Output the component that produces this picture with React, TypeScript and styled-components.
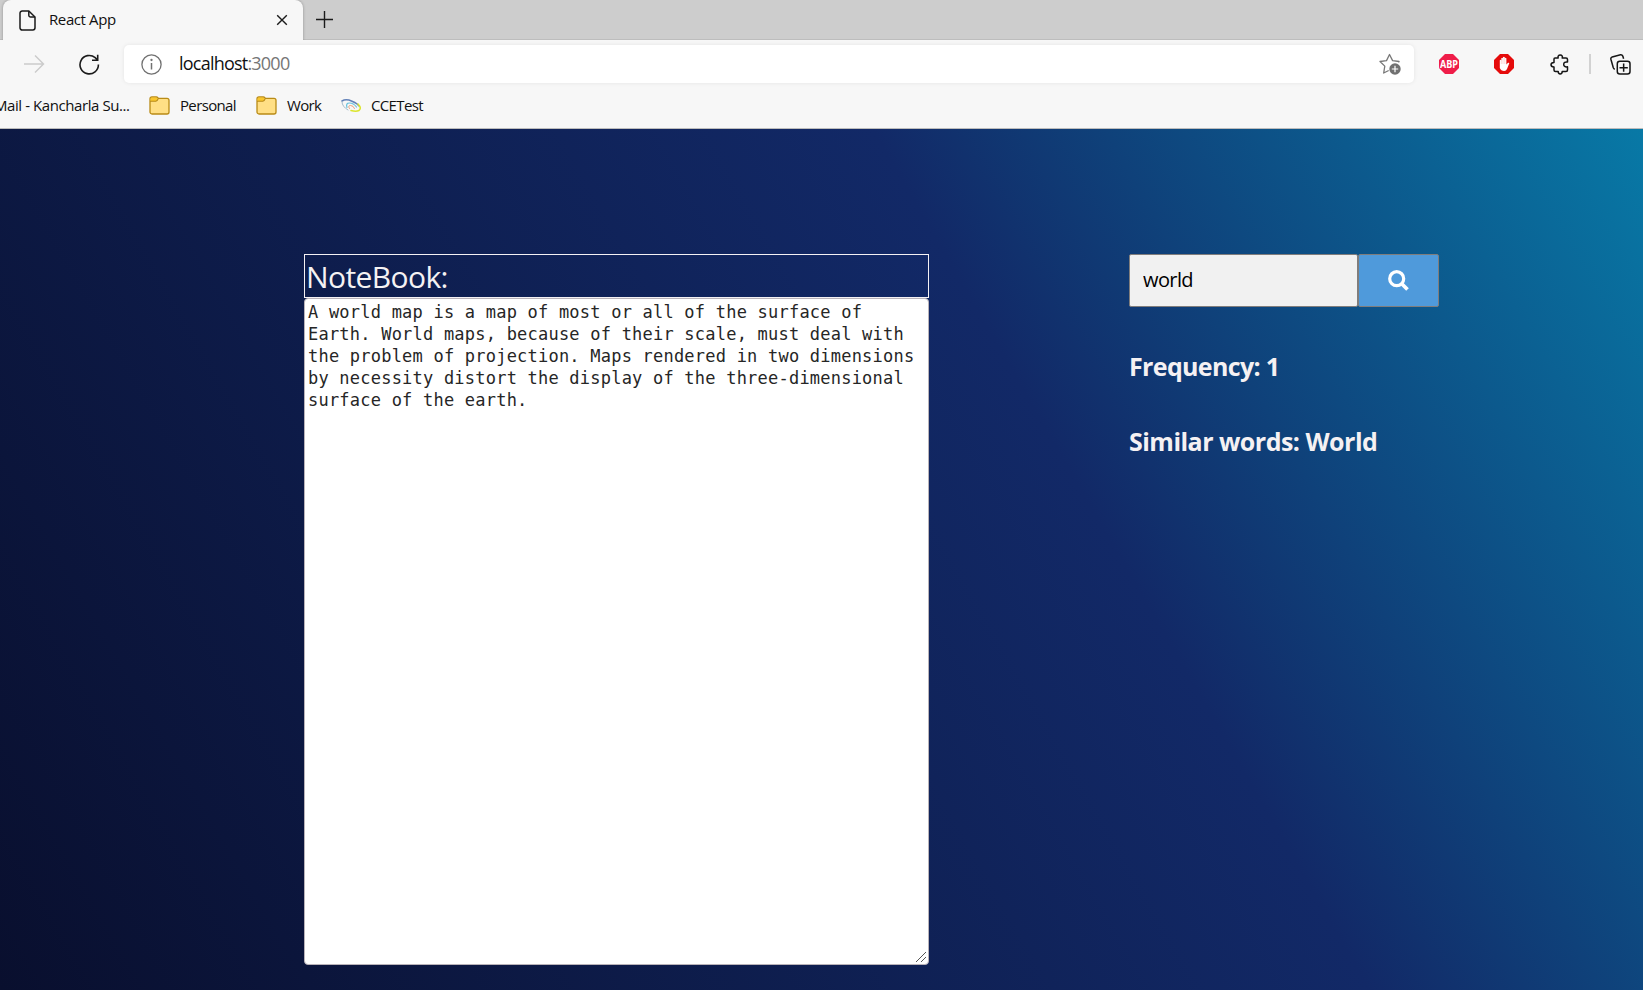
import React from 'react';
import styled, { createGlobalStyle } from 'styled-components';

const Global = createGlobalStyle`
  * { box-sizing: border-box; }
  body { margin: 0; overflow: hidden; font-family: "Open Sans", "Noto Sans", sans-serif; }
  svg { display: block; flex: none; }
`;

const Window = styled.div`
  height: 990px;
  display: flex;
  flex-direction: column;
  overflow: hidden;
`;

const TabStrip = styled.div`
  display: flex;
  height: 40px;
  background: #cdcdcd;
  box-shadow: inset 0 -1px 0 #bdbdbd;
  padding-left: 3px;
  flex: none;
`;

const Tab = styled.div`
  display: flex;
  align-items: center;
  width: 300px;
  height: 40px;
  padding: 0 15px 0 16px;
  background: #f7f7f7;
  border-radius: 8px 8px 0 0;
  box-shadow: 0 0 3px rgba(0, 0, 0, 0.3);
  clip-path: inset(0 -4px 0 -4px);
`;

const Label = styled.span<{ $width: number; $spacing?: number }>`
  width: ${(p) => p.$width}px;
  padding-bottom: 2px;
  font-size: 15px;
  white-space: nowrap;
  color: #101010;
  letter-spacing: ${(p) => p.$spacing ?? -0.65}px;
`;

const TabTitle = styled(Label)`
  margin-left: 13px;
  margin-right: auto;
`;

const NewTab = styled.div`
  display: flex;
  align-items: center;
  padding: 0 0 1px 12px;
`;

const Toolbar = styled.div`
  display: flex;
  align-items: center;
  height: 48px;
  padding: 0 12px 0 23px;
  background: #f7f7f7;
  flex: none;
`;

const AddressBar = styled.div`
  display: flex;
  align-items: center;
  width: 1291px;
  height: 38px;
  margin-left: 24px;
  padding: 0 13px 0 17px;
  background: #fff;
  border-radius: 5px;
  box-shadow: 0 0 4px rgba(0, 0, 0, 0.08);
`;

const Url = styled.span`
  margin: 0 auto 0 17px;
  padding-bottom: 2px;
  font-size: 18px;
  letter-spacing: -0.78px;
  color: #101010;
  span { color: #767676; }
`;

const Extensions = styled.div`
  display: flex;
  align-items: center;
  flex: 1;
  padding-left: 25px;
`;

const Slot = styled.div<{ $gap: number }>`
  margin-left: ${(p) => p.$gap}px;
`;

const Divider = styled.div`
  width: 2px;
  height: 20px;
  margin-left: 19px;
  background: #d2d2d2;
`;

const Bookmarks = styled.div`
  display: flex;
  align-items: center;
  height: 41px;
  padding-bottom: 5px;
  background: #f7f7f7;
  border-bottom: 1px solid #bcbcbc;
  flex: none;
  overflow: hidden;
`;

const MailLabel = styled(Label)`
  margin-left: -6px;
  margin-right: 19px;
`;

const Bookmark = styled.div<{ $gap: number }>`
  display: flex;
  align-items: center;
  gap: 10px;
  margin-right: ${(p) => p.$gap}px;
`;

const Page = styled.main`
  display: flex;
  align-items: flex-start;
  flex: 1;
  padding: 125px 0 0 304px;
  background: linear-gradient(60deg, #090f2e 0%, #122967 64%, #0879a6 100%);
`;

const NotebookColumn = styled.section`
  position: relative;
  width: 625px;
`;

const NotebookTitle = styled.div`
  height: 44px;
  padding-left: 1px;
  border: 1px solid #f4f1f4;
  color: #f5f2f3;
  font-size: 30px;
  line-height: 43px;
  letter-spacing: -0.6px;
`;

const Notes = styled.textarea`
  display: block;
  width: 625px;
  height: 667px;
  padding: 2px 3px;
  border: 1px solid #b9b3b9;
  border-radius: 4px;
  outline: none;
  background: #fff;
  color: #262626;
  font-family: "DejaVu Sans Mono", monospace;
  font-size: 17px;
  letter-spacing: 0.22px;
  line-height: 22px;
  resize: none;
`;

const Grip = styled.svg`
  position: absolute;
  right: 2px;
  bottom: 2px;
`;

const SearchColumn = styled.section`
  margin-left: 200px;
`;

const SearchRow = styled.div`
  display: flex;
`;

const SearchInput = styled.input`
  width: 229px;
  height: 53px;
  padding: 0 13px 2px;
  border: 1px solid #807d7c;
  border-radius: 2px;
  outline: none;
  background: #f1f1f1;
  color: #000;
  font-family: "Open Sans", sans-serif;
  font-size: 20px;
  letter-spacing: -0.6px;
`;

const SearchButton = styled.button`
  display: flex;
  align-items: center;
  justify-content: center;
  width: 81px;
  height: 53px;
  padding: 0;
  border: 1px solid #807d7c;
  border-radius: 2px;
  background: #4f9adb;
`;

const Result = styled.h2<{ $top: number; $spacing: number }>`
  margin: ${(p) => p.$top}px 0 0;
  color: #f5f1f3;
  font-size: 25px;
  line-height: 34px;
  font-weight: 700;
  letter-spacing: ${(p) => p.$spacing}px;
  white-space: nowrap;
`;

const Folder = () => (
  <svg width="21" height="19" viewBox="0 0 21 19">
    <path d="M1 3V3a2 2 0 0 1 2-2h4.500q1.200 0 1.800 1.300H18a2 2 0 0 1 2 2V16a2 2 0 0 1-2 2H3a2 2 0 0 1-2-2z" fill="#ffdf85" stroke="#b98b16" strokeWidth="1.300" />
    <path d="M1.600 5V3A1.400 1.400 0 0 1 3 1.600h4.300L8.800 3 7.200 5z" fill="#f9c62c" />
    <path d="M1 5.300h5.800Q8.300 5 9.300 2.500" fill="none" stroke="#b98b16" strokeWidth="1.100" />
  </svg>
);

const text = 'A world map is a map of most or all of the surface of Earth. World maps, because of their scale, must deal with the problem of projection. Maps rendered in two dimensions by necessity distort the display of the three-dimensional surface of the earth.';

export default function App() {
  return (
    <Window>
      <Global />
      <TabStrip>
        <Tab>
          <svg width="17" height="21" viewBox="0 0 17 21" fill="none" stroke="#1b1b1b" strokeWidth="1.500">
            <path d="M3.200 1h6.600L16 7v10.800a2.200 2.200 0 0 1-2.200 2.200H3.200A2.200 2.200 0 0 1 1 17.800V3.200A2.200 2.200 0 0 1 3.200 1z" />
            <path d="M9.800 1v4.200A1.800 1.800 0 0 0 11.600 7H16" />
          </svg>
          <TabTitle $width={68} $spacing={-0.4}>React App</TabTitle>
          <svg width="12" height="12" viewBox="0 0 12 12" stroke="#1b1b1b" strokeWidth="1.400"><path d="M1.200 1.200l9.600 9.600M10.800 1.200l-9.600 9.600" /></svg>
        </Tab>
        <NewTab>
          <svg width="19" height="19" viewBox="0 0 19 19" stroke="#1b1b1b" strokeWidth="1.400"><path d="M9.500 1v17M1 9.500h17" /></svg>
        </NewTab>
      </TabStrip>
      <Toolbar>
        <svg width="22" height="20" viewBox="0 0 22 20" fill="none" stroke="#cbcbcb" strokeWidth="1.400"><path d="M1 10h19.500M12 1.500l8.500 8.500-8.500 8.500" /></svg>
        <Slot $gap={34}>
          <svg width="21" height="21" viewBox="0 0 21 21" fill="none" stroke="#1b1b1b" strokeWidth="1.600">
            <path d="M19.400 10.500A9.200 9.200 0 1 1 16.200 3.700L18.500 6M18.700 .8V6.200H13" />
          </svg>
        </Slot>
        <AddressBar>
          <svg width="21" height="21" viewBox="0 0 21 21" fill="none" stroke="#707070" strokeWidth="1.300">
            <circle cx="10.500" cy="10.500" r="9.600" /><path d="M10.500 9v6.500" strokeWidth="1.500" /><circle cx="10.500" cy="6" r=".5" />
          </svg>
          <Url>localhost<span>:3000</span></Url>
          <svg width="22" height="22" viewBox="0 0 22 22">
            <path d="M19.500 9.500l.6-1-6.500-.9L10.500 1.500 7.500 7.600l-6.500.9 4.800 4.600L4.700 20l5-2.500" fill="none" stroke="#777" strokeWidth="1.300" strokeLinejoin="round" />
            <circle cx="16" cy="16" r="5.700" fill="#707070" /><path d="M16 12.800v6.400M12.800 16h6.400" stroke="#fff" strokeWidth="1.200" />
          </svg>
        </AddressBar>
        <Extensions>
          <svg width="20" height="20" viewBox="0 0 20 20">
            <path d="M6 0h8l6 6v8l-6 6H6l-6-6V6z" fill="#ef1d49" />
            <text x="10" y="14" textAnchor="middle" textLength="18" lengthAdjust="spacingAndGlyphs" fontFamily="Open Sans, sans-serif" fontWeight="700" fontSize="11" fill="#fff">ABP</text>
          </svg>
          <Slot $gap={35}>
            <svg width="20" height="20" viewBox="0 0 20 20">
              <path d="M6 0h8l6 6v8l-6 6H6l-6-6V6z" fill="#e50b0b" />
              <path d="M5.800 11V6.200q.9-1 1.500 0V4.200q.9-1 1.700 0V3.200q.9-1 1.800 0v1q1-.8 1.600.2v6.200l1.600-1.800q1.100-.4 1.300.5L13 15q-.8 1.900-2.800 1.900-3.300 0-4.400-3z" fill="#fff" />
              <path d="M7.300 5v5M9 4.300V10M10.800 4v6" stroke="#f3a0a0" strokeWidth=".4" />
            </svg>
          </Slot>
          <Slot $gap={36}>
            <svg width="20" height="21" viewBox="0 0 20 21" fill="none" stroke="#161616" strokeWidth="1.500" strokeLinejoin="round">
              <path d="M5 4H8.200C7.600 2.300 8.500 1 10.200 1s2.700 1.300 2 3H16q1.500 0 1.500 1.500V8c-2.400-.4-3.800.8-3.800 2.400s1.400 2.900 3.800 2.400V16q0 1.500-1.500 1.500h-3.800c0 1.500-.8 2.400-2 2.400s-2-.9-2-2.400H5.500Q4 17.500 4 16v-3c-2 0-3-.8-3-2.200s1-2.300 3-2.300V5q0-1 1-1z" />
            </svg>
          </Slot>
          <Divider />
          <Slot $gap={19}>
            <svg width="21" height="21" viewBox="0 0 21 21" fill="none" stroke="#161616" strokeWidth="1.500">
              <rect x="7.300" y="7.300" width="12.700" height="12.700" rx="2.500" /><path d="M13.650 9.500v8.300M9.500 13.650h8.300M4.800 15.200q-1-.3-1.500-1.500L.9 5.200Q.5 3.500 2.200 2.900L10.500.8q1.700-.2 2.300 1.300l.8 2.700" />
            </svg>
          </Slot>
        </Extensions>
      </Toolbar>
      <Bookmarks>
        <MailLabel $width={136} $spacing={-0.42}>Mail - Kancharla Su...</MailLabel>
        <Bookmark $gap={20}><Folder /><Label $width={56}>Personal</Label></Bookmark>
        <Bookmark $gap={18}><Folder /><Label $width={36}>Work</Label></Bookmark>
        <Bookmark $gap={0}>
          <svg width="20" height="13" viewBox="0 0 20 13" fill="none" strokeLinecap="round">
            <path d="M1 2Q5-.4 11 2.200T18 7" stroke="#6281b8" strokeWidth="1.500" /><path d="M1 3q0 4.500 6 8" stroke="#a4bccb" />
            <path d="M17 5q4 4 1 6.500-3 1.500-8 0" stroke="#dce52c" strokeWidth="1.500" /><path d="M6 8.500Q4.500 4 8.500 4t7 4" stroke="#65c0dc" strokeWidth="1.200" /><path d="M8.500 9.500q-2-3 1-3t4 3" stroke="#eba07a" />
          </svg>
          <Label $width={54}>CCETest</Label>
        </Bookmark>
      </Bookmarks>
      <Page>
        <NotebookColumn>
          <NotebookTitle>NoteBook:</NotebookTitle>
          <Notes defaultValue={text} spellCheck={false} />
          <Grip width="12" height="12" viewBox="0 0 12 12" stroke="#555" strokeWidth="1"><path d="M1 11L11 1M6 11L11 6" /></Grip>
        </NotebookColumn>
        <SearchColumn>
          <SearchRow>
            <SearchInput defaultValue="world" />
            <SearchButton aria-label="Search">
              <svg width="21" height="21" viewBox="0 0 21 21" fill="none" stroke="#fff" strokeWidth="3.200"><circle cx="8.700" cy="8.700" r="7" /><path d="M13.500 13.500l6 6" strokeWidth="3.700" /></svg>
            </SearchButton>
          </SearchRow>
          <Result $top={42} $spacing={-0.65}>Frequency: 1</Result>
          <Result $top={41} $spacing={-0.52}>Similar words: World</Result>
        </SearchColumn>
      </Page>
    </Window>
  );
}
